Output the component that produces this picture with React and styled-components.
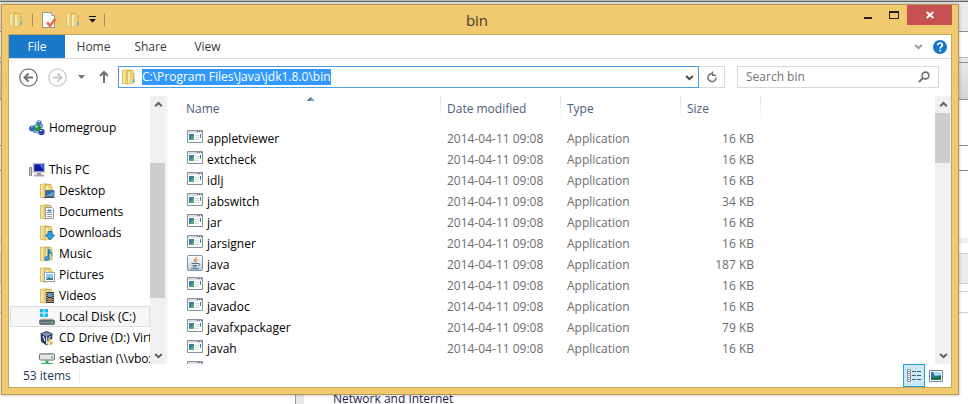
import React, { useEffect, useRef } from "react";
import styled, { createGlobalStyle, css } from "styled-components";

const GlobalStyle = createGlobalStyle`
  *, *::before, *::after { box-sizing: border-box; }
  body { margin: 0; background: #fff; }
  body, button, input, table {
    font-family: "Open Sans", "Noto Sans", sans-serif;
    font-size: 12px;
    line-height: 16px;
  }
  svg { display: block; flex: none; }
`;

/* ---------- desktop and the page behind the window ---------- */

const Desktop = styled.div`
  display: grid;
  grid-template: minmax(0, 1fr) / minmax(0, 1fr);
  height: 100vh;
  overflow: hidden;
`;

const Backdrop = styled.div`
  grid-area: 1 / 1;
  display: flex;
  flex-direction: column;
  min-height: 0;
  overflow: hidden;
  background: #fff;
`;

const Band = styled.div`
  flex: none;
  height: ${(p) => p.$h}px;
  background: ${(p) => p.$fill || "#fff"};
  border-bottom: ${(p) => (p.$line ? `1px solid ${p.$line}` : "0")};
`;

const BackdropFooter = styled.div`
  display: flex;
  flex: none;
  height: 13px;
  margin-top: auto;
  color: #1c1c50;
`;

const BackdropDivider = styled.div`
  width: 9px;
  margin-left: 295px;
  background: #e8e8e8;
  border-left: 1px solid #a592a5;
`;

const BackdropLabel = styled.span`
  margin-left: 29px;
`;

const bands = [
  { h: 2, fill: "#b9bbb8", line: "#626262" },
  { h: 30, fill: "#eaeaea", line: "#8e8e8e" },
  { h: 26, line: "#b5b5b5" },
  { h: 5, fill: "#e9e9e9", line: "#8e8e8e" },
  { h: 37, fill: "linear-gradient(#e8e8e8, #d2d2d2)", line: "#8e8e8e" },
  { h: 46, line: "#8e8e8e" },
  { h: 25, line: "#8e8e8e" },
  { h: 67 },
  { h: 5, fill: "#ededed" },
  { h: 11, line: "#d0d0d0" },
  { h: 30, fill: "#ebebeb", line: "#d0d0d0" },
  { h: 8, line: "#d0d0d0" },
  { h: 21, line: "#d0d0d0" },
];

/* ---------- window frame ---------- */

const Frame = styled.main`
  grid-area: 1 / 1;
  display: flex;
  flex-direction: column;
  min-height: 0;
  margin: 4px 9px 9px 1px;
  padding: 0 6px 6px;
  background: #f0c971;
  border: 1px solid #b89850;
  box-shadow: 0 0 3px rgba(0, 0, 0, 0.3);
`;

const TitleBar = styled.header`
  display: grid;
  grid-template-columns: 1fr auto 1fr;
  align-items: center;
  flex: none;
  height: 29px;
`;

const QuickAccess = styled.div`
  display: flex;
  align-items: center;
  gap: 8px;
`;

const Rule = styled.span`
  width: 1px;
  height: 12px;
  background: #a68f5d;
`;

const Title = styled.h1`
  margin: 0 6px 0 0;
  color: #453d28;
  font-size: 15px;
  font-weight: 400;
  line-height: 20px;
`;

const Caption = styled.div`
  display: flex;
  align-self: start;
  justify-content: flex-end;
`;

const plainButton = css`
  display: flex;
  align-items: center;
  justify-content: center;
  padding: 0;
  border: 0;
  background: transparent;
  color: inherit;
`;

const IconButton = styled.button`
  ${plainButton}
`;

const CaptionButton = styled.button`
  ${plainButton}
  width: ${(p) => (p.$close ? 45 : 26)}px;
  height: 20px;
  background: ${(p) => (p.$close ? "#c75050" : "transparent")};
`;

const Client = styled.div`
  display: flex;
  flex: 1;
  flex-direction: column;
  min-height: 0;
  background: #fff;
  border: 1px solid #c5a55e;
`;

/* ---------- ribbon ---------- */

const Ribbon = styled.nav`
  display: flex;
  flex: none;
  height: 24px;
  border-bottom: 1px solid #dadbdc;
`;

const Tab = styled.button`
  ${plainButton}
  width: ${(p) => (p.$file ? 56 : 57)}px;
  background: ${(p) => (p.$file ? "#1979ca" : "transparent")};
  color: ${(p) => (p.$file ? "#fff" : "#3b3b3b")};
`;

const RibbonTools = styled.div`
  display: flex;
  align-items: center;
  gap: 10px;
  margin-left: auto;
  padding-right: 4px;
`;

/* ---------- navigation row ---------- */

const NavRow = styled.div`
  display: flex;
  flex: none;
  height: 37px;
  padding: 7px 12px 8px 10px;
`;

const NavButtons = styled.div`
  display: flex;
  align-items: center;
  gap: 10px;
  margin-right: 10px;
`;

const AddressBox = styled.div`
  display: flex;
  flex: 1;
  align-items: center;
  min-width: 0;
  padding: 0 4px 0 2px;
  border: 1px solid #4f9be0;
`;

const AddressInput = styled.input`
  flex: 1;
  min-width: 0;
  height: 16px;
  margin-left: 5px;
  padding: 0;
  border: 0;
  outline: 0;
  color: #000;
  caret-color: transparent;
  &::selection { background: #3399ff; color: #fff; }
`;

const Refresh = styled.button`
  ${plainButton}
  width: 26px;
  border: 1px solid #d9d9d9;
  border-left: 0;
`;

const SearchBox = styled.label`
  display: flex;
  align-items: center;
  width: 202px;
  margin-left: 12px;
  padding: 0 8px;
  border: 1px solid #d9d9d9;
`;

const SearchInput = styled.input`
  flex: 1;
  min-width: 0;
  padding: 0;
  border: 0;
  outline: 0;
  &::placeholder { color: #757575; opacity: 1; }
`;

/* ---------- panes ---------- */

const Panes = styled.div`
  display: flex;
  flex: 1;
  min-height: 0;
`;

const TreePane = styled.aside`
  display: flex;
  flex: none;
  width: 159px;
  border-right: 2px solid #f7f7f7;
`;

const Tree = styled.ul`
  flex: 1;
  min-width: 0;
  margin: 0;
  padding: 21px 0 0 1px;
  overflow: hidden;
  list-style: none;
`;

const TreeItem = styled.li`
  display: flex;
  align-items: center;
  gap: 4px;
  height: 21px;
  margin-bottom: ${(p) => (p.$spaced ? 21 : 0)}px;
  padding-left: ${(p) => (p.$nested ? 28 : 18)}px;
  white-space: nowrap;
  color: #000;
  border: 1px solid ${(p) => (p.$selected ? "#dedede" : "transparent")};
  background: ${(p) => (p.$selected ? "#f7f7f7" : "transparent")};
`;

const Track = styled.div`
  display: flex;
  flex: none;
  flex-direction: column;
  width: 16px;
  background: #f0f0f0;
`;

const TrackButton = styled.button`
  ${plainButton}
  height: 17px;
  color: #606060;
`;

const TrackBody = styled.div`
  flex: 1;
  padding-top: ${(p) => p.$top}px;
  padding-right: 1px;
`;

const Thumb = styled.div`
  height: ${(p) => p.$h}px;
  background: #cdcdcd;
`;

const ListPane = styled.section`
  flex: 1;
  min-width: 0;
  padding-left: 12px;
  overflow: hidden;
`;

const FileTable = styled.table`
  width: 100%;
  table-layout: fixed;
  border-collapse: separate;
  border-spacing: 0;
`;

const Col = styled.col`
  width: ${(p) => (p.$w ? `${p.$w}px` : "auto")};
`;

const HeadCell = styled.th`
  position: relative;
  height: 32px;
  padding: 5px 6px 0;
  text-align: left;
  vertical-align: top;
  font-weight: 400;
  color: #4c607a;
  background: linear-gradient(#d5e4f4, #e8f0f9 60%, #fff) right top / 1px 22px no-repeat;
`;

const SortMark = styled.svg`
  position: absolute;
  top: 1px;
  left: 50%;
  margin-left: -4px;
`;

const Cell = styled.td`
  height: 21px;
  padding: 1px 7px 0 6px;
  vertical-align: top;
  line-height: 19px;
  white-space: nowrap;
  text-align: ${(p) => (p.$right ? "right" : "left")};
  color: #6d6d6d;
`;

const FileName = styled.div`
  display: flex;
  gap: 4px;
  padding-left: 1px;
  color: #000;
`;

/* ---------- status bar ---------- */

const StatusBar = styled.footer`
  display: flex;
  flex: none;
  align-items: center;
  height: 23px;
  padding: 0 8px 0 14px;
  color: #1e395b;
`;

const StatusRule = styled.span`
  width: 1px;
  height: 12px;
  margin-left: 8px;
  background: #ececec;
`;

const Views = styled.div`
  display: flex;
  align-self: stretch;
  gap: 4px;
  margin-left: auto;
`;

const ViewButton = styled.button`
  ${plainButton}
  width: ${(p) => (p.$active ? 22 : 14)}px;
  background: ${(p) => (p.$active ? "#cbe8f6" : "transparent")};
  border: ${(p) => (p.$active ? "1px solid #26a0da" : "0")};
`;

/* ---------- icons ---------- */

const Folder = ({ children }) => (
  <svg width="16" height="16" viewBox="0 0 16 16" aria-hidden="true">
    <path d="M1 1 6 .5l6.500 .5v2.500l1 .5v10L6 15.500 1 14.500z" fill="#cfae52" />
    <path d="M1.500 1.500 5.800 1v14L1.500 14z" fill="#ead27e" />
    <path d="M2 2 3.800 1.700v12.500L2 13.800z" fill="#f6e6a8" />
    <path d="M6.500 2.500 12 1.500v12L6.500 15z" fill="#ead080" />
    <path d="M7 3 9 2.500V14l-2 .5z" fill="#f8ebb0" />
    <path d="M12.200 4.500H13v9l-.8.2z" fill="#e2c976" />
    {children || <path d="M12 10h1.500v3H12z" fill="#4ba8ee" />}
  </svg>
);

const overlays = {
  desktop: (
    <>
      <path d="M6.500 7.500H15v6H6.500z" fill="#2d6cae" stroke="#5f7085" />
      <path d="m7 13 7.500-4.500V13z" fill="#65a5d8" />
      <path d="M5 14.500h10.500" stroke="#3f4a58" />
    </>
  ),
  documents: (
    <>
      <path d="M6.500 3.500H13l1.500 1.500v9.500h-8z" fill="#fff" stroke="#989898" />
      <path d="M8 6.500h2m1 0h2M8 8.500h5M8 10.500h5M8 12.500h5" stroke="#829fbd" />
      <path d="M9 5.500h3v2H9z" fill="#3c8ed0" />
    </>
  ),
  downloads: <path d="M9 6.500h4V10h2.500l-4.500 5-4.500-5H9z" fill="#27a3e8" stroke="#1671b5" />,
  music: (
    <>
      <path d="M9.500 3v9" stroke="#1776be" strokeWidth="2" />
      <path d="M10 2c0 3 4 3.500 3.500 9-.6-2.500-1.500-3.500-3.500-4z" fill="#248cd4" />
      <ellipse cx="8" cy="12.500" rx="2.500" ry="2" fill="#3ba9ec" stroke="#1467a8" strokeWidth=".6" />
    </>
  ),
  pictures: (
    <>
      <path d="M5.500 5.500h10v9h-10z" fill="#fff" stroke="#929fac" />
      <path d="M7 7h7v6H7z" fill="#8acaf1" />
      <path d="m7 13 3-3 2 1.500 2-1V13z" fill="#367f8b" />
    </>
  ),
  videos: (
    <>
      <path d="M7 4h8v11H7z" fill="#343b45" />
      <path d="M9 5h4v4H9z" fill="#5c9bc9" />
      <path d="M9 10h4v4H9z" fill="#af7a54" />
      <path d="M8 5v10M14 5v10" stroke="#e8e8e8" strokeDasharray="1 1" />
    </>
  ),
};

const Homegroup = () => (
  <svg width="16" height="16" viewBox="0 0 16 16" aria-hidden="true">
    <path d="m3 8 6-5 4 9-4 1z" fill="none" stroke="#98b5ea" strokeWidth="2" />
    <circle cx="10" cy="3" r="2.700" fill="#4b78d2" />
    <circle cx="3" cy="8.500" r="2.900" fill="#3664c4" />
    <circle cx="12.500" cy="12" r="3.200" fill="#3049a8" />
    <circle cx="8.500" cy="7.700" r="3.400" fill="#22913d" />
    <circle cx="7.500" cy="6.500" r="1.300" fill="#a3eda6" />
    <path d="M9 1.500h2M2 7h1.500M11 10.500h2" stroke="#cfdfff" />
    <path d="M13 4v4M4 12h4" stroke="#7a9ce0" strokeWidth="2" />
  </svg>
);

const Computer = () => (
  <svg width="16" height="16" viewBox="0 0 16 16" aria-hidden="true">
    <path d="M.5 5.500h2v8h-2z" fill="#d2d5d8" stroke="#82868a" />
    <path d="M1 7.500h1" stroke="#43e04c" />
    <path d="M4.500 1.500h11v8.500h-11z" fill="#0b17a8" stroke="#bcbfc3" strokeWidth="1.500" />
    <path d="M10 2.500h4.500V8z" fill="#4c63de" />
    <path d="M8 11h4v2H8z" fill="#898e93" />
    <path d="M5 13.500h10" stroke="#a4a8ac" strokeWidth="2" />
  </svg>
);

const Disk = () => (
  <svg width="16" height="16" viewBox="0 0 16 16" aria-hidden="true">
    <path d="M1 0h3.500v3.500H1zM5.500 0H9v3.500H5.500zM1 4.500h3.500V8H1zM5.500 4.500H9V8H5.500z" fill="#12bdf2" />
    <path d="m2.500 9.500-2 2h15l-2-2z" fill="#c4c8ca" />
    <rect x=".5" y="11" width="15" height="4.500" rx="1" fill="#617078" stroke="#4d5960" strokeWidth=".6" />
    <path d="M2 13.500h9" stroke="#87979f" />
    <path d="M12 13.500h2" stroke="#42e85f" strokeWidth="1.500" />
  </svg>
);

const CdDrive = () => (
  <svg width="16" height="16" viewBox="0 0 16 16" aria-hidden="true">
    <path d="m7.500 1 6 2.500-.5 8-5.500 4L2 11.500l-.5-8z" fill="#253d60" />
    <path d="m2.500 4 5 2.500L13 4 7.500 2z" fill="#7b91ad" />
    <path d="m7.500 6.500 .3 8M4 6l2 5M11.500 6l-2 3" stroke="#dbe3ec" strokeWidth="1.200" />
    <circle cx="11" cy="12" r="2.900" fill="#f2b134" />
    <path d="M11 9v3h3a3 3 0 0 0-3-3M8 12h3v3a3 3 0 0 1-3-3" fill="#e9edf2" />
  </svg>
);

const NetDrive = () => (
  <svg width="16" height="16" viewBox="0 0 16 16" aria-hidden="true">
    <path d="M2 2h12l1.500 2H.5z" fill="#c7caca" />
    <rect x=".5" y="3" width="15" height="6" rx="1" fill="#e3e5e5" stroke="#6d7377" />
    <path d="M12 6.500h2" stroke="#31c84d" strokeWidth="1.500" />
    <path d="M8 9.500V13" stroke="#2eab5b" strokeWidth="3" />
    <path d="M2 13h12" stroke="#39b768" strokeWidth="2" />
  </svg>
);

const AppIcon = () => (
  <svg width="16" height="16" viewBox="0 0 16 16" aria-hidden="true">
    <path d="M.5 1.500h15v12H.5z" fill="#fff" stroke="#8b8f97" />
    <path d="M1 2h14v2H1z" fill="#d9dce2" />
    <path d="M10 2.500h1m1 0h1m1 0h1" stroke="#5b6370" />
    <path d="M2 5h5v6H2z" fill="#397da0" />
    <path d="m2 11 5-5v5z" fill="#4ea97d" />
    <path d="M8 6.500h4m-4 2h4m-4 2h4" stroke="#d3d6da" />
    <path d="M13.500 5v3" stroke="#2d7bab" />
    <path d="M13.500 8v1" stroke="#51b080" />
  </svg>
);

const JavaIcon = () => (
  <svg width="16" height="16" viewBox="0 0 16 16" aria-hidden="true">
    <defs>
      <linearGradient id="java-tile" x2="0" y2="1">
        <stop stopColor="#fff" />
        <stop offset="1" stopColor="#bfd0dd" />
      </linearGradient>
    </defs>
    <rect x=".5" y=".5" width="15" height="15" rx="1" fill="url(#java-tile)" stroke="#7892a6" />
    <path d="M9 2c1 2-3 2.500-1.500 5M10.500 4.500C8 6 9.500 6 8.500 7.500" fill="none" stroke="#e77d32" strokeWidth="1.200" />
    <path d="M4.500 8.500H11m-5.500 2H10m1-2c2.500-.5 2 2 0 2.200M6 12h3.500M4 13.800h8" fill="none" stroke="#496f91" />
  </svg>
);

const CheckedPage = () => (
  <svg width="16" height="16" viewBox="0 0 16 16" aria-hidden="true">
    <path d="M1.500.5h9l3 3v12h-12z" fill="#fbfbfb" stroke="#9b9588" />
    <path d="M10.500.5v3h3" fill="#e6e6e6" stroke="#aaa69d" />
    <path d="m6 10.500 3 3.200 5.500-7" fill="none" stroke="#e66e48" strokeWidth="2.600" />
  </svg>
);

const Chevron = ({ up, size = 9, color = "currentColor" }) => (
  <svg width={size} height={size} viewBox="0 0 9 9" aria-hidden="true">
    <path d={up ? "M1.200 6.200 4.500 3l3.300 3.200" : "M1.200 3 4.500 6.200 7.800 3"} fill="none" stroke={color} strokeWidth="2" />
  </svg>
);

const RoundArrow = ({ forward }) => (
  <svg width="19" height="19" viewBox="0 0 19 19" aria-hidden="true">
    <circle cx="9.500" cy="9.500" r="8.700" fill="none" stroke={forward ? "#c9c9c9" : "#717171"} strokeWidth="1.300" />
    <path
      d={forward ? "M5 9.500h8M9.500 5.500l4 4-4 4" : "M14 9.500H6M9.500 5.500l-4 4 4 4"}
      fill="none"
      stroke={forward ? "#c9c9c9" : "#717171"}
      strokeWidth="2"
    />
  </svg>
);

/* ---------- data ---------- */

const places = [
  { name: "Homegroup", icon: <Homegroup />, spaced: true },
  { name: "This PC", icon: <Computer /> },
  { name: "Desktop", icon: <Folder>{overlays.desktop}</Folder>, nested: true },
  { name: "Documents", icon: <Folder>{overlays.documents}</Folder>, nested: true },
  { name: "Downloads", icon: <Folder>{overlays.downloads}</Folder>, nested: true },
  { name: "Music", icon: <Folder>{overlays.music}</Folder>, nested: true },
  { name: "Pictures", icon: <Folder>{overlays.pictures}</Folder>, nested: true },
  { name: "Videos", icon: <Folder>{overlays.videos}</Folder>, nested: true },
  { name: "Local Disk (C:)", icon: <Disk />, nested: true, selected: true },
  { name: "CD Drive (D:) Virt", icon: <CdDrive />, nested: true },
  { name: "sebastian (\\\\vbox", icon: <NetDrive />, nested: true },
];

const files = [
  ["appletviewer", 16],
  ["extcheck", 16],
  ["idlj", 16],
  ["jabswitch", 34],
  ["jar", 16],
  ["jarsigner", 16],
  ["java", 187],
  ["javac", 16],
  ["javadoc", 16],
  ["javafxpackager", 79],
  ["javah", 16],
  ["javap", 16],
];

function ScrollTrack({ top, thumb }) {
  return (
    <Track>
      <TrackButton aria-label="Scroll up"><Chevron up /></TrackButton>
      <TrackBody $top={top}><Thumb $h={thumb} /></TrackBody>
      <TrackButton aria-label="Scroll down"><Chevron /></TrackButton>
    </Track>
  );
}

export default function App() {
  const address = useRef(null);

  useEffect(() => {
    address.current.focus();
    address.current.select();
  }, []);

  return (
    <>
      <GlobalStyle />
      <Desktop>
        <Backdrop>
          {bands.map((b, i) => (
            <Band key={i} $h={b.h} $fill={b.fill} $line={b.line} />
          ))}
          <BackdropFooter>
            <BackdropDivider />
            <BackdropLabel>Network and Internet</BackdropLabel>
          </BackdropFooter>
        </Backdrop>

        <Frame>
          <TitleBar>
            <QuickAccess>
              <Folder />
              <Rule />
              <IconButton aria-label="Properties"><CheckedPage /></IconButton>
              <IconButton aria-label="New folder"><Folder /></IconButton>
              <IconButton aria-label="Customize toolbar">
                <svg width="7" height="7" viewBox="0 0 7 7" aria-hidden="true">
                  <path d="M0 0h7v1H0zM0 3h7L3.500 6.500z" fill="#111" />
                </svg>
              </IconButton>
              <Rule />
            </QuickAccess>
            <Title>bin</Title>
            <Caption>
              <CaptionButton aria-label="Minimize">
                <svg width="10" height="10" viewBox="0 0 10 10" aria-hidden="true">
                  <path d="M1 7h8v2H1z" fill="#222" />
                </svg>
              </CaptionButton>
              <CaptionButton aria-label="Maximize">
                <svg width="10" height="10" viewBox="0 0 10 10" aria-hidden="true">
                  <path d="M0 1h10v8H0zM1 3v5h8V3z" fill="#222" fillRule="evenodd" />
                </svg>
              </CaptionButton>
              <CaptionButton $close aria-label="Close">
                <svg width="8" height="8" viewBox="0 0 8 8" aria-hidden="true">
                  <path d="m.7 1 6.600 6M7.300 1 .7 7" stroke="#fff" strokeWidth="1.800" />
                </svg>
              </CaptionButton>
            </Caption>
          </TitleBar>

          <Client>
            <Ribbon>
              <Tab $file>File</Tab>
              <Tab>Home</Tab>
              <Tab>Share</Tab>
              <Tab>View</Tab>
              <RibbonTools>
                <IconButton aria-label="Expand ribbon"><Chevron color="#9a9a9a" /></IconButton>
                <IconButton aria-label="Help">
                  <svg width="14" height="14" viewBox="0 0 14 14" aria-hidden="true">
                    <circle cx="7" cy="7" r="7" fill="#1577c9" />
                    <path d="M4.800 5.200C4.800 2.300 9.300 2.300 9.300 5c0 1.700-2.100 1.600-2.100 3.400M7.200 9.700v1.700" fill="none" stroke="#fff" strokeWidth="1.700" />
                  </svg>
                </IconButton>
              </RibbonTools>
            </Ribbon>

            <NavRow>
              <NavButtons>
                <IconButton aria-label="Back"><RoundArrow /></IconButton>
                <IconButton aria-label="Forward"><RoundArrow forward /></IconButton>
                <IconButton aria-label="Recent locations">
                  <svg width="10" height="10" viewBox="0 0 10 10" aria-hidden="true">
                    <path d="M1 3h7L4.500 7z" fill="#717171" />
                  </svg>
                </IconButton>
                <IconButton aria-label="Up one level">
                  <svg width="11" height="14" viewBox="0 0 11 14" aria-hidden="true">
                    <path d="M7 13V2.500M3 6l4-4 4 4" fill="none" stroke="#717171" strokeWidth="2" />
                  </svg>
                </IconButton>
              </NavButtons>
              <AddressBox>
                <Folder />
                <AddressInput ref={address} aria-label="Address" defaultValue={"C:\\Program Files\\Java\\jdk1.8.0\\bin"} />
                <IconButton aria-label="Previous locations"><Chevron color="#444" /></IconButton>
              </AddressBox>
              <Refresh aria-label="Refresh">
                <svg width="12" height="12" viewBox="0 0 12 12" aria-hidden="true">
                  <path d="M10 6.500A4 4 0 1 1 7 2.700" fill="none" stroke="#777" strokeWidth="1.600" />
                  <path d="M6.500 0h4v4.500H6.500z" fill="#fff" />
                  <path d="M6.500 4.500V.5M6 4.200h4" fill="none" stroke="#777" strokeWidth="1.500" />
                </svg>
              </Refresh>
              <SearchBox>
                <SearchInput type="text" aria-label="Search bin" placeholder="Search bin" />
                <svg width="12" height="12" viewBox="0 0 12 12" aria-hidden="true">
                  <circle cx="7.500" cy="4.500" r="3.400" fill="none" stroke="#717171" strokeWidth="1.600" />
                  <path d="M5 7 1 11" stroke="#717171" strokeWidth="2" />
                </svg>
              </SearchBox>
            </NavRow>

            <Panes>
              <TreePane>
                <Tree>
                  {places.map((p) => (
                    <TreeItem key={p.name} $nested={p.nested} $spaced={p.spaced} $selected={p.selected}>
                      {p.icon}
                      {p.name}
                    </TreeItem>
                  ))}
                </Tree>
                <ScrollTrack top={50} thumb={135} />
              </TreePane>

              <ListPane>
                <FileTable>
                  <colgroup>
                    <Col $w={261} />
                    <Col $w={120} />
                    <Col $w={120} />
                    <Col $w={80} />
                  </colgroup>
                  <thead>
                    <tr>
                      <HeadCell>
                        Name
                        <SortMark width="8" height="4" viewBox="0 0 8 4" aria-hidden="true">
                          <path d="M4 0 8 4H0z" fill="#6ba6c6" />
                          <path d="M4 0v2L1.500 4H0z" fill="#355f7c" />
                        </SortMark>
                      </HeadCell>
                      <HeadCell>Date modified</HeadCell>
                      <HeadCell>Type</HeadCell>
                      <HeadCell>Size</HeadCell>
                      <td />
                    </tr>
                  </thead>
                  <tbody>
                    {files.map(([name, size]) => (
                      <tr key={name}>
                        <Cell>
                          <FileName>
                            {name === "java" ? <JavaIcon /> : <AppIcon />}
                            {name}
                          </FileName>
                        </Cell>
                        <Cell>2014-04-11 09:08</Cell>
                        <Cell>Application</Cell>
                        <Cell $right>{size} KB</Cell>
                        <td />
                      </tr>
                    ))}
                  </tbody>
                </FileTable>
              </ListPane>
              <ScrollTrack top={0} thumb={50} />
            </Panes>

            <StatusBar>
              53 items
              <StatusRule />
              <Views>
                <ViewButton $active aria-label="Details view">
                  <svg width="16" height="14" viewBox="0 0 16 14" aria-hidden="true">
                    <path d="M1.500.5h3v4h-3zM1.500 4.500h3v4h-3zM1.500 8.500h3v4h-3z" fill="#fff" stroke="#8b929b" />
                    <path d="M2.500 2.500h1m-1 8h1" stroke="#333" />
                    <path d="M2.500 6.500h1" stroke="#d33" />
                    <path d="M6 2.500h4m1 0h4m-9 4h4m1 0h4m-9 4h4m1 0h4" stroke="#46606e" />
                  </svg>
                </ViewButton>
                <ViewButton aria-label="Thumbnail view">
                  <svg width="14" height="12" viewBox="0 0 14 12" aria-hidden="true">
                    <path d="M.5.5h13v11H.5z" fill="#fff" stroke="#75889b" />
                    <path d="M2 2h10v8H2z" fill="#2b78b4" />
                    <path d="M4 2h8v3L6 6z" fill="#a8ddf3" />
                    <path d="m2 8 10-2v4H2z" fill="#246f4b" />
                  </svg>
                </ViewButton>
              </Views>
            </StatusBar>
          </Client>
        </Frame>
      </Desktop>
    </>
  );
}
